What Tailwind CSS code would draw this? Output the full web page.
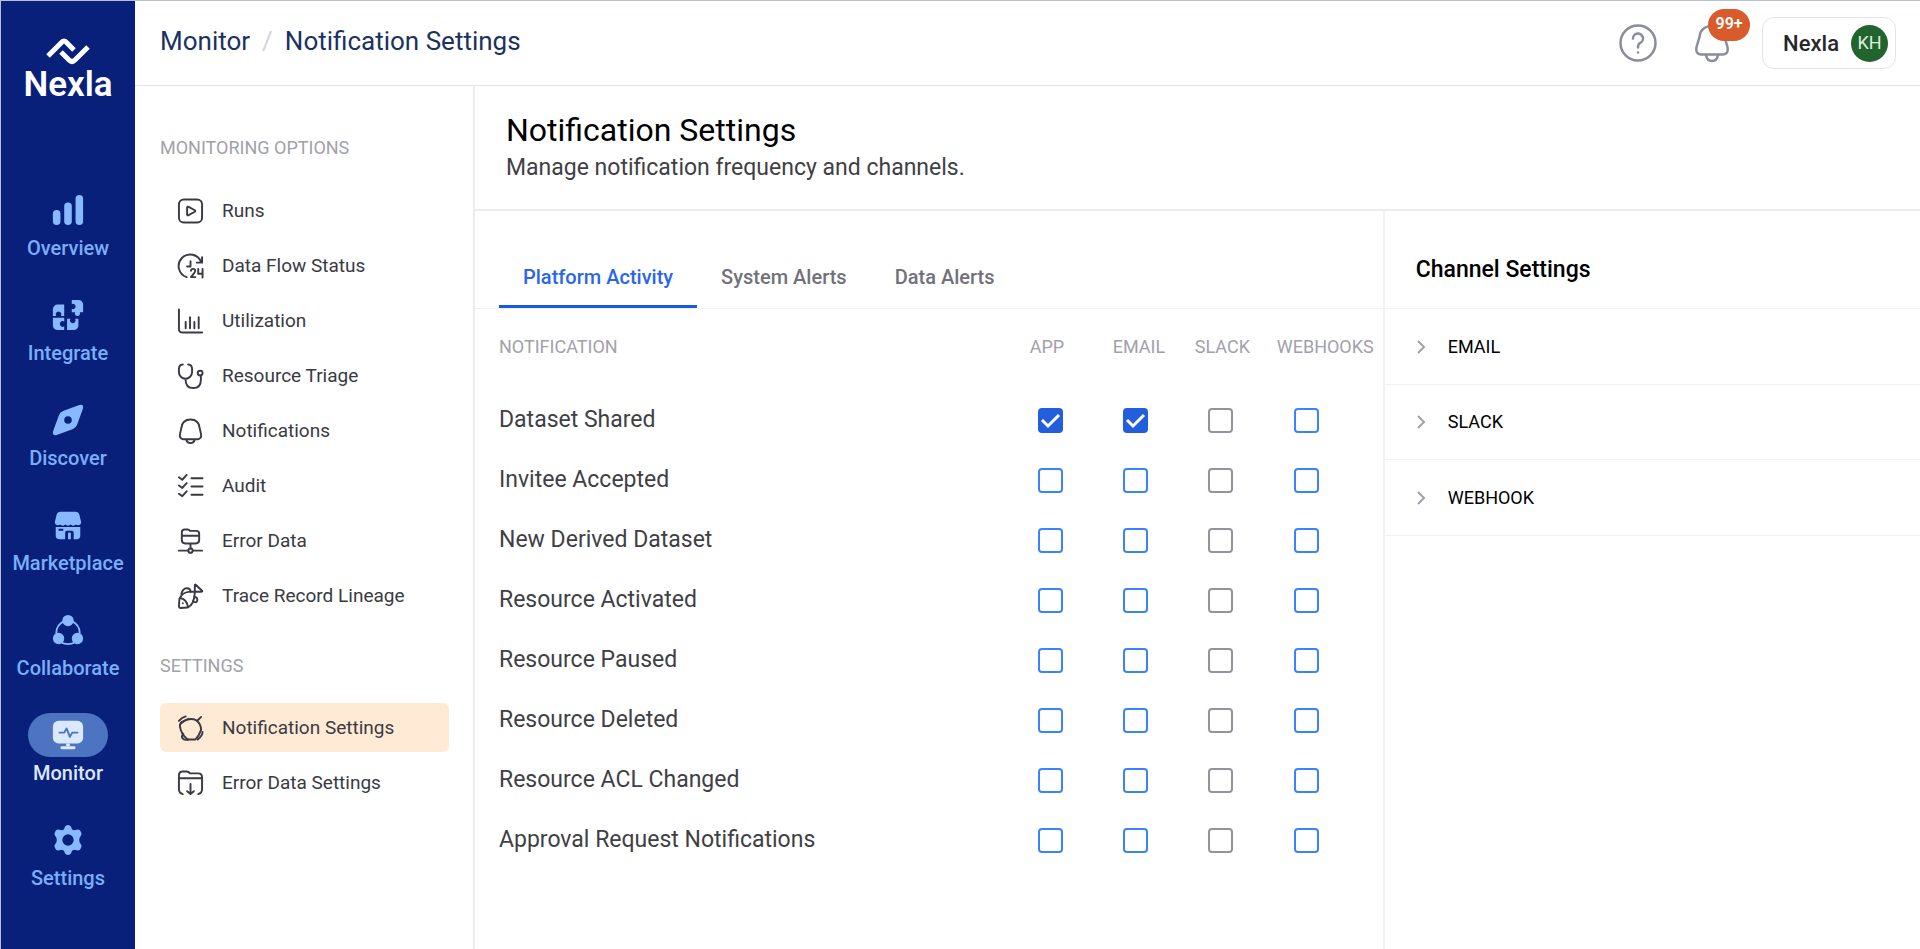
<!DOCTYPE html>
<html lang="en">
<head>
    <meta charset="UTF-8">
    <meta name="viewport" content="width=device-width, initial-scale=1.0">
    <title>Notification Settings - Nexla</title>
    <script src="https://cdn.jsdelivr.net/npm/@tailwindcss/browser@4"></script>
</head>
<body class="bg-white font-['Roboto','Liberation_Sans',sans-serif] text-[#3f3f46]">
<div class="flex min-h-screen border-t border-l border-[#b9bfd6]">

    <!-- Main navigation -->
    <nav class="w-[134px] shrink-0 bg-[#08207a] text-[#7aaff8] font-medium text-xl leading-6" aria-label="Main">
        <a href="#" class="flex flex-col items-center pt-[34px] text-white">
            <svg class="w-11 h-8" viewBox="0 0 44 32" fill="none" stroke="currentColor" stroke-width="5" stroke-linejoin="round">
                <path d="M2 21L15 8Q18 4 21 8L28 15"/>
                <path d="M15 17L23 25Q26 28 29 25L42 12"/>
            </svg>
            <span class="text-[35px] leading-9 font-semibold">Nexla</span>
        </a>
        <ul class="mt-[85px] flex flex-col gap-[33px]">
            <li>
                <a href="#" class="flex flex-col items-center gap-1">
                    <span class="flex items-center justify-center w-20 h-11 rounded-full">
                        <svg class="w-[34px] h-[34px]" viewBox="0 0 36 36" fill="#88b8ff">
                            <rect x="2" y="18" width="8" height="16" rx="4"/>
                            <rect x="14" y="10" width="8" height="24" rx="4"/>
                            <rect x="26" y="2" width="8" height="32" rx="4"/>
                        </svg>
                    </span>
                    Overview
                </a>
            </li>
            <li>
                <a href="#" class="flex flex-col items-center gap-1">
                    <span class="flex items-center justify-center w-20 h-11 rounded-full">
                        <svg class="w-[34px] h-[34px]" viewBox="0 0 36 36" fill="#88b8ff">
                            <path d="M2 19V12a5 5 0 0 1 5-5h7v12h-3.500a3 3 0 1 0-5 0z"/>
                            <path d="M2 21h12v4a3 3 0 1 0 0 5v4H7a5 5 0 0 1-5-5z"/>
                            <path d="M17 22h3.500a3 3 0 1 0 5 0H29v7a5 5 0 0 1-5 5h-7z"/>
                            <path d="M22 2h7a5 5 0 0 1 5 5v8h-3.500a2.800 2.800 0 1 1-5 0H22v-3.500a2.800 2.800 0 1 0 0-5z"/>
                        </svg>
                    </span>
                    Integrate
                </a>
            </li>
            <li>
                <a href="#" class="flex flex-col items-center gap-1">
                    <span class="flex items-center justify-center w-20 h-11 rounded-full">
                        <svg class="w-[34px] h-[34px]" viewBox="0 0 36 36" fill="#88b8ff">
                            <path fill-rule="evenodd" d="M30 2.200Q35 1 33.800 6L28 22Q26.500 26.500 22 28L6 33.800Q1 35 2.200 30L8 14Q9.500 9.500 14 8zM18 14a4 4 0 1 0 0 8a4 4 0 1 0 0-8z"/>
                        </svg>
                    </span>
                    Discover
                </a>
            </li>
            <li>
                <a href="#" class="flex flex-col items-center gap-1">
                    <span class="flex items-center justify-center w-20 h-11 rounded-full">
                        <svg class="w-[34px] h-[34px]" viewBox="0 0 36 36" fill="#88b8ff">
                            <path d="M10 4h16q3 0 4 3l2 8a3.400 3.400 0 0 1-5.600 2.500a3.800 3.800 0 0 1-5.600 0a3.800 3.800 0 0 1-5.600 0a3.800 3.800 0 0 1-5.600 0A3.400 3.400 0 0 1 4 15l2-8q1-3 4-3z"/>
                            <path fill-rule="evenodd" d="M5 20h26v9q0 4-4 4h-3v-7q0-2-2-2h-5q-2 0-2 2v7H9q-4 0-4-4zM8 22v2h5v-2z"/>
                            <path d="M18 27q0-1 1-1h1q1 0 1 1v6h-3z"/>
                        </svg>
                    </span>
                    Marketplace
                </a>
            </li>
            <li>
                <a href="#" class="flex flex-col items-center gap-1">
                    <span class="flex items-center justify-center w-20 h-11 rounded-full">
                        <svg class="w-[34px] h-[34px]" viewBox="0 0 36 36" fill="#88b8ff">
                            <path fill="none" stroke="#88b8ff" stroke-width="2" d="M14 8.500Q5.500 12 5.500 22M22 8.500Q30.500 12 30.500 22M10 31Q18 35 26 31"/>
                            <circle cx="18" cy="8" r="6"/>
                            <circle cx="8" cy="27" r="6"/>
                            <circle cx="28" cy="27" r="6"/>
                        </svg>
                    </span>
                    Collaborate
                </a>
            </li>
            <li>
                <a href="#" class="flex flex-col items-center gap-1 text-[#dbe6fb]" aria-current="page">
                    <span class="flex items-center justify-center w-20 h-11 rounded-full bg-[#4c74c0]">
                        <svg class="w-[34px] h-[34px]" viewBox="0 0 36 36" fill="#dbe9ff">
                            <rect x="2" y="3" width="32" height="24" rx="6"/>
                            <path d="M16 27h4v3h-4z"/>
                            <rect x="10" y="30" width="16" height="3" rx="1.500"/>
                            <path fill="none" stroke="#4c74c0" stroke-width="2" stroke-linecap="round" stroke-linejoin="round" d="M9 15.500h5l2.500-4.500l3.500 9l2.500-4.500H28"/>
                        </svg>
                    </span>
                    Monitor
                </a>
            </li>
            <li>
                <a href="#" class="flex flex-col items-center gap-1">
                    <span class="flex items-center justify-center w-20 h-11 rounded-full">
                        <svg class="w-[34px] h-[34px]" viewBox="0 0 36 36" fill="#88b8ff">
                            <path fill-rule="evenodd" d="M18 2q3 0 4 4q1 2 4 1.500q4-1.500 5.500 1.500q2 3-1 6q-1.500 3 0 6q3 3 1 6q-1.500 3-5.500 1.500q-3-.5-4 1.500q-1 4-4 4t-4-4q-1-2-4-1.500q-4 1.500-5.500-1.500q-2-3 1-6q1.500-3 0-6q-3-3-1-6q1.500-3 5.500-1.500q3 .5 4-1.500q1-4 4-4zM18 12a6 6 0 1 0 0 12a6 6 0 1 0 0-12z"/>
                        </svg>
                    </span>
                    Settings
                </a>
            </li>
        </ul>
    </nav>

    <div class="flex-1 min-w-0 flex flex-col">
        <!-- Top bar -->
        <header class="flex items-center justify-between h-[85px] pl-[25px] pr-6 border-b border-[#e4e4e7]">
            <div class="flex items-center gap-3 pb-1 text-[26px] leading-8 text-[#1b325f]">
                <a href="#">Monitor</a>
                <span class="text-[#d4d4d8]">/</span>
                <span>Notification Settings</span>
            </div>
            <div class="flex items-center">
                <button type="button" aria-label="Help" class="mr-[34px]">
                    <svg class="w-10 h-10" viewBox="0 0 40 40" fill="none" stroke="#8a8c9e" stroke-width="2.500" stroke-linecap="round">
                        <circle cx="20" cy="20" r="17.500"/>
                        <path d="M15 15.500a5 5 0 1 1 7 4.500q-2 1-2 4.500"/>
                        <path d="M20 29.500v.1"/>
                    </svg>
                </button>
                <button type="button" aria-label="Notifications" class="relative mr-[30px]">
                    <svg class="w-10 h-10" viewBox="0 0 40 40" fill="none" stroke="#8a8c9e" stroke-width="2.500" stroke-linejoin="round">
                        <path d="M20 3C12 3 8 8 7.500 14L4.500 24Q3 31 9 31.500H31Q37 31 35.500 24L32.500 14C32 8 28 3 20 3z"/>
                        <path d="M14 32q1 6 6 6t6-6"/>
                    </svg>
                    <span class="absolute left-4 -top-[14px] w-[42px] h-8 rounded-full bg-[#d95b2c] text-white text-base leading-[30px] font-semibold">99+</span>
                </button>
                <button type="button" class="flex items-center gap-3 h-[52px] pl-5 pr-[7px] border border-[#e4e4e7] rounded-xl text-[22px] font-medium text-[#27272a]">
                    Nexla
                    <span class="flex items-center justify-center w-[37px] h-[37px] rounded-full bg-[#22642e] text-[#dfeee0] text-lg font-normal">KH</span>
                </button>
            </div>
        </header>

        <div class="flex-1 flex">
            <!-- Monitoring menu -->
            <aside class="w-[340px] shrink-0 border-r-2 border-[#ececee] pl-[25px] pr-6 pt-[50px] text-[19px] leading-6">
                <h2 class="text-lg leading-6 text-[#a1a1aa]">MONITORING OPTIONS</h2>
                <ul class="mt-[26px] flex flex-col gap-1.5 text-[#3a3a44]">
                    <li>
                        <a href="#" class="flex items-center gap-[18px] h-[49px] pl-[17px]">
                            <svg class="w-[27px] h-7" viewBox="0 0 28 28" fill="none" stroke="currentColor" stroke-width="2" stroke-linejoin="round">
                                <rect x="2" y="2" width="24" height="24" rx="5"/>
                                <path d="M10.500 10.500q0-1.500 1.500-.8l6.500 3.500q1 .8 0 1.600L12 18.300q-1.500.7-1.500-.8z"/>
                            </svg>
                            Runs
                        </a>
                    </li>
                    <li>
                        <a href="#" class="flex items-center gap-[18px] h-[49px] pl-[17px]">
                            <svg class="w-[27px] h-7" viewBox="0 0 28 28" fill="none" stroke="currentColor" stroke-width="2" stroke-linecap="round" stroke-linejoin="round">
                                <path d="M10 25.500A12 12 0 1 1 25 10M26 5v5.500h-5.500M14 9v5.500h-3.500"/>
                                <path d="M14.500 19q0-2 2.200-2t2.200 2q0 1.500-4.400 6.500H19M22 17v5h4.500M26.500 17v9"/>
                            </svg>
                            Data Flow Status
                        </a>
                    </li>
                    <li>
                        <a href="#" class="flex items-center gap-[18px] h-[49px] pl-[17px]">
                            <svg class="w-[27px] h-7" viewBox="0 0 28 28" fill="none" stroke="currentColor" stroke-width="2" stroke-linecap="round">
                                <path d="M2 2v20q0 4 4 4h20M9 15v6.500M13.500 10v11.500M18 15v6.500M22.500 10v11.500"/>
                            </svg>
                            Utilization
                        </a>
                    </li>
                    <li>
                        <a href="#" class="flex items-center gap-[18px] h-[49px] pl-[17px]">
                            <svg class="w-[27px] h-7" viewBox="0 0 28 28" fill="none" stroke="currentColor" stroke-width="2" stroke-linecap="round">
                                <path d="M6 2Q2 2.500 2 6.500V10a6.800 6.800 0 0 0 13.600 0V6.500Q15.600 2.500 11.600 2M8.800 17q0 9.500 8 9.500t8-9v-4"/>
                                <circle cx="24" cy="11" r="2.500"/>
                            </svg>
                            Resource Triage
                        </a>
                    </li>
                    <li>
                        <a href="#" class="flex items-center gap-[18px] h-[49px] pl-[17px]">
                            <svg class="w-[27px] h-7" viewBox="0 0 28 28" fill="none" stroke="currentColor" stroke-width="2" stroke-linejoin="round">
                                <path d="M14 2C8 2 5 6 4.500 11L3 17.500Q2.500 22 6.500 22.500H21.500Q25.500 22 25 17.500L23.500 11C23 6 20 2 14 2z"/>
                                <path d="M9.500 22.500q1 4 4.500 4t4.500-4"/>
                            </svg>
                            Notifications
                        </a>
                    </li>
                    <li>
                        <a href="#" class="flex items-center gap-[18px] h-[49px] pl-[17px]">
                            <svg class="w-[27px] h-7" viewBox="0 0 28 28" fill="none" stroke="currentColor" stroke-width="2" stroke-linecap="round" stroke-linejoin="round">
                                <path d="M2 5l3.500 2.500L10 2.500M2 13.500L5.500 16l4.500-5M2 22l3.500 2.500L10 19.500M15 6h11.500M15 14.500h11.500M15 23h11.500"/>
                            </svg>
                            Audit
                        </a>
                    </li>
                    <li>
                        <a href="#" class="flex items-center gap-[18px] h-[49px] pl-[17px]">
                            <svg class="w-[27px] h-7" viewBox="0 0 28 28" fill="none" stroke="currentColor" stroke-width="2" stroke-linecap="round" stroke-linejoin="round">
                                <path d="M5 5q0-3 3-3h3q1.500 0 2.500 1.500H20q3 0 3 3V13q0 3.500-3.500 3.500h-11Q5 16.500 5 13zM5 8.500h18M14 16.500v5M2 24h9.500M16.500 24H26"/>
                                <circle cx="14" cy="24" r="2.200"/>
                            </svg>
                            Error Data
                        </a>
                    </li>
                    <li>
                        <a href="#" class="flex items-center gap-[18px] h-[49px] pl-[17px]">
                            <svg class="w-[27px] h-7" viewBox="0 0 28 28" fill="none" stroke="currentColor" stroke-width="2" stroke-linecap="round" stroke-linejoin="round">
                                <path d="M18.500 9.500V3q0-1.500 1.200-.4L26 8.500q.8 1-.5 1H14Q5 10 2.500 17L2 25q0 1.500 1.500 1.500L11 26Q18 23 18.500 10"/>
                                <path d="M3 16q7 1 8.500 9.500M4.500 12Q6 6 10 6t4 3.500M18 15q3.500 0 3 3.500t-4.500 1M6 21.500v.1"/>
                            </svg>
                            Trace Record Lineage
                        </a>
                    </li>
                </ul>
                <h2 class="mt-[34px] text-lg leading-6 text-[#a1a1aa]">SETTINGS</h2>
                <ul class="mt-[25px] flex flex-col gap-1.5 text-[#3a3a44]">
                    <li>
                        <a href="#" class="flex items-center gap-[18px] h-[49px] pl-[17px] rounded-md bg-[#ffead5]" aria-current="page">
                            <svg class="w-[27px] h-7" viewBox="0 0 28 28" fill="none" stroke="currentColor" stroke-width="2" stroke-linecap="round" stroke-linejoin="round">
                                <path d="M3 12Q3 8 7 7Q14 3 20 6Q25 10 25 16Q23 22 19 26H11Q4 20 3 12z"/>
                                <path d="M2 6.500Q5 3 9 2M21 6.500l4-4M6.500 20q-2.500 3-.5 5t6 1M26.500 18q0 4-5 8M4 9.500q4-4 8-5"/>
                            </svg>
                            Notification Settings
                        </a>
                    </li>
                    <li>
                        <a href="#" class="flex items-center gap-[18px] h-[49px] pl-[17px]">
                            <svg class="w-[27px] h-7" viewBox="0 0 28 28" fill="none" stroke="currentColor" stroke-width="2" stroke-linecap="round" stroke-linejoin="round">
                                <path d="M6 25.500Q2 24.500 2 20.500V6q0-4 4-4h4q2 0 3.500 2H22q4 0 4 4v12.500q0 4-4 5M2 9h24M14 15v10M10.500 22.500l3.500 3l3.500-3"/>
                            </svg>
                            Error Data Settings
                        </a>
                    </li>
                </ul>
            </aside>

            <main class="flex-1 min-w-0 flex flex-col">
                <div class="h-[125px] pt-6 pl-[31px] border-b-2 border-[#ececee]">
                    <h1 class="text-[32px] leading-10 text-black">Notification Settings</h1>
                    <p class="text-[23px] leading-9">Manage notification frequency and channels.</p>
                </div>

                <div class="flex-1 flex">
                    <section class="flex-[909] min-w-0">
                        <div role="tablist" class="flex items-end h-[98px] pl-6 border-b border-[#f1f1f3] text-xl leading-6 font-medium text-[#71717a]">
                            <button type="button" role="tab" aria-selected="true" class="h-[63px] pt-1 px-6 text-[#2b66e8] border-b-3 border-[#155be6]">Platform Activity</button>
                            <button type="button" role="tab" class="h-[63px] pt-1 px-6 border-b-3 border-transparent">System Alerts</button>
                            <button type="button" role="tab" class="h-[63px] pt-1 px-6 border-b-3 border-transparent">Data Alerts</button>
                        </div>

                        <table class="w-full table-fixed text-left">
                            <thead>
                                <tr class="h-[81px] text-lg text-[#a1a1aa]">
                                    <th class="pb-1.5 pl-6 font-normal">NOTIFICATION</th>
                                    <th class="pb-1.5 w-[83px] font-normal">APP</th>
                                    <th class="pb-1.5 w-[82px] font-normal">EMAIL</th>
                                    <th class="pb-1.5 w-[82px] font-normal">SLACK</th>
                                    <th class="pb-1.5 w-[106px] font-normal">WEBHOOKS</th>
                                </tr>
                            </thead>
                            <tbody id="notificationRows" class="text-[23px] leading-6"></tbody>
                        </table>
                    </section>

                    <!-- Channel settings -->
                    <section class="flex-[536] min-w-0 border-l-2 border-[#f3f3f5]">
                        <h2 class="flex items-center h-[98px] pt-5 pl-[31px] border-b border-[#f1f1f3] text-[23px] leading-6 font-medium text-black">Channel Settings</h2>
                        <button type="button" class="flex items-center gap-5 w-full h-[76px] pl-[31px] border-b border-[#f1f1f3] text-lg text-black">
                            <svg class="w-3 h-5" viewBox="0 0 12 20" fill="none" stroke="#a1a1aa" stroke-width="2"><path d="M2 4l6 6l-6 6"/></svg>
                            EMAIL
                        </button>
                        <button type="button" class="flex items-center gap-5 w-full h-[75px] pl-[31px] border-b border-[#f1f1f3] text-lg text-black">
                            <svg class="w-3 h-5" viewBox="0 0 12 20" fill="none" stroke="#a1a1aa" stroke-width="2"><path d="M2 4l6 6l-6 6"/></svg>
                            SLACK
                        </button>
                        <button type="button" class="flex items-center gap-5 w-full h-[76px] pl-[31px] border-b border-[#f1f1f3] text-lg text-black">
                            <svg class="w-3 h-5" viewBox="0 0 12 20" fill="none" stroke="#a1a1aa" stroke-width="2"><path d="M2 4l6 6l-6 6"/></svg>
                            WEBHOOK
                        </button>
                    </section>
                </div>
            </main>
        </div>
    </div>
</div>

<script>
    const channels = [
        { name: 'App', cell: 'pl-2' },
        { name: 'Email', cell: 'pl-[10px]' },
        { name: 'Slack', cell: 'pl-[13px]' },
        { name: 'Webhooks', cell: 'pl-[17px]' }
    ];
    const notifications = [
        { name: 'Dataset Shared', on: ['App', 'Email'] },
        { name: 'Invitee Accepted', on: [] },
        { name: 'New Derived Dataset', on: [] },
        { name: 'Resource Activated', on: [] },
        { name: 'Resource Paused', on: [] },
        { name: 'Resource Deleted', on: [] },
        { name: 'Resource ACL Changed', on: [] },
        { name: 'Approval Request Notifications', on: [] }
    ];

    // Slack is not connected, so its boxes are grey and disabled
    function checkbox(item, channel) {
        const checked = item.on.includes(channel.name) ? 'checked' : '';
        const disabled = channel.name === 'Slack' ? 'disabled' : '';
        return `
            <td class="${channel.cell}">
                <label class="relative block w-[25px] h-[25px]">
                    <input type="checkbox" aria-label="${item.name}: ${channel.name}" ${checked} ${disabled}
                        class="peer block appearance-none w-[25px] h-[25px] rounded-sm border-2 border-[#3b82ff] checked:bg-[#235edb] checked:border-[#235edb] disabled:border-[#9393a0]">
                    <svg class="hidden peer-checked:block absolute inset-0 w-[25px] h-[25px]" viewBox="0 0 25 25" fill="none" stroke="#fff" stroke-width="3"><path d="M4 12l6 6L21 7"/></svg>
                </label>
            </td>`;
    }

    document.getElementById('notificationRows').innerHTML = notifications.map(item => `
        <tr class="h-[60px]">
            <td class="pl-6">${item.name}</td>
            ${channels.map(channel => checkbox(item, channel)).join('')}
        </tr>`).join('');
</script>
</body>
</html>
